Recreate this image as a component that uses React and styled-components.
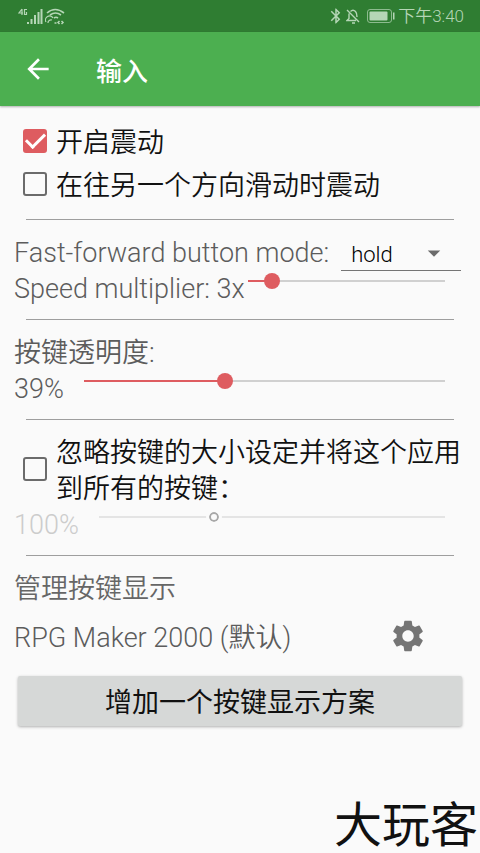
import React, { useState } from 'react'
import styled, { createGlobalStyle } from 'styled-components'
import { MdArrowBack, MdSettings, MdArrowDropDown, MdBluetooth } from 'react-icons/md'

const schemes = [
    { id: 1, name: 'RPG Maker 2000 (默认)' },
]

const Slider = ({ value, min, max, ...rest }) => (
    <Range
        type="range"
        value={value}
        min={min}
        max={max}
        style={{ '--fill': (value - min) / (max - min) }}
        {...rest}
    />
)

const App = () => {
    const [vibrate, setVibrate] = useState(true)
    const [vibrateSlide, setVibrateSlide] = useState(false)
    const [mode, setMode] = useState('hold')
    const [speed, setSpeed] = useState(3)
    const [opacity, setOpacity] = useState(39)
    const [ignoreSize, setIgnoreSize] = useState(false)
    const [size, setSize] = useState(100)

    return (
        <Page>
            <GlobalStyle />
            <StatusBar>
                <StatusGroup>
                    <SignalIcon />
                    <WifiIcon />
                </StatusGroup>
                <StatusGroup>
                    <MdBluetooth size={18} />
                    <BellOffIcon />
                    <BatteryIcon />
                    <Time>下午3:40</Time>
                </StatusGroup>
            </StatusBar>
            <Toolbar>
                <IconButton type="button" aria-label="返回">
                    <MdArrowBack size={32} />
                </IconButton>
                <Title>输入</Title>
            </Toolbar>
            <Main>
                <Section>
                    <CheckRow>
                        <Checkbox type="checkbox" checked={vibrate} onChange={e => setVibrate(e.target.checked)} />
                        <span>开启震动</span>
                    </CheckRow>
                    <CheckRow>
                        <Checkbox type="checkbox" checked={vibrateSlide} onChange={e => setVibrateSlide(e.target.checked)} />
                        <span>在往另一个方向滑动时震动</span>
                    </CheckRow>
                </Section>
                <Divider />
                <Section>
                    <Row>
                        <Label htmlFor="mode">Fast-forward button mode:</Label>
                        <SelectBox>
                            <Select id="mode" value={mode} onChange={e => setMode(e.target.value)}>
                                <option value="hold">hold</option>
                                <option value="tap">tap</option>
                            </Select>
                            <MdArrowDropDown size={30} />
                        </SelectBox>
                    </Row>
                    <Row $slider $gap={3}>
                        <Label htmlFor="speed">Speed multiplier: {speed}x</Label>
                        <Slider id="speed" min={2} max={10} value={speed} onChange={e => setSpeed(+e.target.value)} />
                    </Row>
                </Section>
                <Divider />
                <Section>
                    <Label htmlFor="opacity">按键透明度:</Label>
                    <Row $slider $gap={20}>
                        <Label as="output" htmlFor="opacity">{opacity}%</Label>
                        <Slider id="opacity" min={0} max={100} value={opacity} onChange={e => setOpacity(+e.target.value)} />
                    </Row>
                </Section>
                <Divider />
                <Section>
                    <CheckRow>
                        <Checkbox type="checkbox" checked={ignoreSize} onChange={e => setIgnoreSize(e.target.checked)} />
                        <span>忽略按键的大小设定并将这个应用到所有的按键：</span>
                    </CheckRow>
                    <Row $slider $gap={20}>
                        <Label htmlFor="size" $disabled={!ignoreSize}>{size}%</Label>
                        <Slider id="size" min={50} max={200} value={size} disabled={!ignoreSize} onChange={e => setSize(+e.target.value)} />
                    </Row>
                </Section>
                <Divider />
                <Section>
                    <Heading>管理按键显示</Heading>
                    {schemes.map(s => (
                        <SchemeRow key={s.id}>
                            <Label as="span">{s.name}</Label>
                            <IconButton type="button" aria-label="设置">
                                <MdSettings size={38} />
                            </IconButton>
                        </SchemeRow>
                    ))}
                    <AddButton type="button">增加一个按键显示方案</AddButton>
                </Section>
            </Main>
            <Brand>大玩客</Brand>
        </Page>
    )
}

const SignalIcon = () => (
    <svg width="26" height="18" viewBox="0 0 26 18" fill="none" stroke="currentColor">
        <path d="M4 2 L1 6 H5 M4 2 V8" strokeWidth="1.200" />
        <path d="M9 2.500H6.500V7.500H8.500V5" strokeWidth="1.200" />
        <path d="M10 17v-2M13.500 17v-5M17 17V8M20.500 17V5M23.500 17V2" strokeWidth="2" />
    </svg>
)

const WifiIcon = () => (
    <svg width="20" height="18" viewBox="0 0 20 18" fill="none" stroke="currentColor">
        <path d="M2 6 Q10 -1 19 6M5 8 Q10.500 4 16 8M9 11 Q11 9.500 13 11" strokeWidth="1.600" />
        <path d="M1 15a4 4 0 0 1 7-4M3 16a3 3 0 0 1 4-3" strokeWidth="1.200" />
        <path d="M9.500 16h2M14.500 14l-1.500 1.500 1.500 1.500M16.500 14l1.500 1.500-1.500 1.500" strokeWidth="1.500" />
    </svg>
)

const BellOffIcon = () => (
    <svg width="14" height="16" viewBox="0 0 14 16" fill="none" stroke="currentColor" strokeWidth="1.400">
        <path d="M4.500 3.500Q7 1 9.500 3.500Q11 5 11 9M3 5.500V10.500L1 12.500H10M1 2l12 12M6 15h3" />
    </svg>
)

const BatteryIcon = () => (
    <svg width="28" height="14" viewBox="0 0 28 14">
        <rect x="0.500" y="0.500" width="24" height="13" rx="2.500" fill="none" stroke="currentColor" opacity="0.700" />
        <rect x="2.500" y="2.500" width="18" height="9" rx="1" fill="currentColor" />
        <rect x="26" y="3.500" width="1.500" height="7" fill="currentColor" />
    </svg>
)

const GlobalStyle = createGlobalStyle`
    *{
        box-sizing:border-box;
    }
    body{
        margin:0;
        background:#fafafa;
        font-family:Roboto, "Noto Sans CJK SC", sans-serif;
    }
`
const Page = styled.div`
    display:flex;
    flex-direction:column;
    min-height:100vh;
    color:#111;
`
const StatusBar = styled.div`
    display:flex;
    align-items:center;
    justify-content:space-between;
    height:32px;
    padding:0 16px 0 18px;
    background:#2f7d32;
    color:#b5d6b6;
`
const StatusGroup = styled.div`
    display:flex;
    align-items:center;
    gap:1px;
    svg + svg + svg{
        margin-left:6px;
    }
`
const Time = styled.span`
    margin-left:2px;
    font-size:17px;
    font-weight:350;
    line-height:20px;
`
const Toolbar = styled.header`
    display:flex;
    align-items:center;
    gap:42px;
    height:74px;
    padding:0 22px;
    background:#4caf50;
    color:#fff;
    box-shadow:0 1px 2px rgba(0,0,0,0.3);
`
const IconButton = styled.button`
    display:flex;
    padding:0;
    border:none;
    background:none;
    color:inherit;
`
const Title = styled.h1`
    margin:0;
    font-size:26px;
    font-weight:500;
`
const Main = styled.main`
    flex:1;
    padding:0 14px;
`
const Section = styled.section`
    padding:15px 0 12px;
`
const Divider = styled.hr`
    height:1px;
    margin:0 12px;
    border:none;
    background:#9e9e9e;
`
const CheckRow = styled.label`
    display:flex;
    align-items:center;
    gap:9px;
    min-height:43px;
    margin:0 -4px 0 9px;
    font-size:27px;
    font-weight:350;
    line-height:36px;
`
const Checkbox = styled.input`
    appearance:none;
    display:grid;
    place-items:center;
    flex:none;
    width:24px;
    height:24px;
    margin:0 0 4px;
    border:2px solid #6b6b6b;
    border-radius:3px;
    &:checked{
        border-color:#de5c60;
        background:#de5c60;
    }
    &:checked::after{
        content:"";
        width:16px;
        height:8px;
        border:solid #fff;
        border-width:0 0 3px 3px;
        transform:translateY(-2px) rotate(-45deg);
    }
`
const Row = styled.div`
    display:flex;
    align-items:${p => p.$slider ? 'flex-start' : 'center'};
    gap:${p => p.$gap || 0}px;
    height:36px;
    padding-right:${p => p.$slider ? 13 : 5}px;
`
const Label = styled.label`
    flex:none;
    color:${p => p.$disabled ? '#ccc' : '#5c5c5c'};
    font-size:27px;
    font-weight:350;
    line-height:36px;
`
const SelectBox = styled.div`
    display:flex;
    align-items:center;
    flex:1;
    height:36px;
    margin-left:12px;
    padding:0 12px 0 10px;
    border-bottom:1px solid #757575;
    color:#6b6b6b;
`
const Select = styled.select`
    appearance:none;
    flex:1;
    min-width:0;
    padding:3px 0 0;
    border:none;
    background:none;
    color:#000;
    font-family:inherit;
    font-size:22px;
    font-weight:350;
`
/* the 16px thumb travels inside the input, so the drawn track is inset by half of it */
const Range = styled.input`
    appearance:none;
    flex:1;
    min-width:0;
    height:20px;
    margin:0 0 0 -8px;
    background-color:transparent;
    background-image:linear-gradient(#de5c60, #de5c60), linear-gradient(#d0d0d0, #d0d0d0);
    background-repeat:no-repeat;
    background-position:8px center, 8px center;
    background-size:calc((100% - 16px) * var(--fill)) 2px, calc(100% - 16px) 2px;
    &::-webkit-slider-thumb{
        appearance:none;
        width:16px;
        height:16px;
        border-radius:50%;
        background:#de5c60;
    }
    &:disabled{
        background-image:linear-gradient(#e4e4e4, #e4e4e4), linear-gradient(#e4e4e4, #e4e4e4);
    }
    &:disabled::-webkit-slider-thumb{
        border:3px solid #fafafa;
        background:#fafafa;
        box-shadow:inset 0 0 0 2px #a8a8a8;
    }
`
const Heading = styled.h2`
    margin:0;
    color:#666;
    font-size:27px;
    font-weight:350;
    line-height:36px;
`
const SchemeRow = styled.div`
    display:flex;
    align-items:center;
    justify-content:space-between;
    height:62px;
    padding-right:39px;
    color:#757575;
    ${IconButton}{
        margin-bottom:4px;
    }
`
const AddButton = styled.button`
    display:block;
    width:calc(100% - 8px);
    height:50px;
    margin:7px 4px;
    padding:0 0 2px;
    border:none;
    border-radius:2px;
    background:#d6d8d7;
    box-shadow:0 1px 3px rgba(0,0,0,0.3);
    color:#111;
    font-family:inherit;
    font-size:27px;
    font-weight:400;
`
const Brand = styled.footer`
    padding-right:2px;
    text-align:right;
    font-size:48px;
    font-weight:400;
    line-height:54px;
`

export default App
